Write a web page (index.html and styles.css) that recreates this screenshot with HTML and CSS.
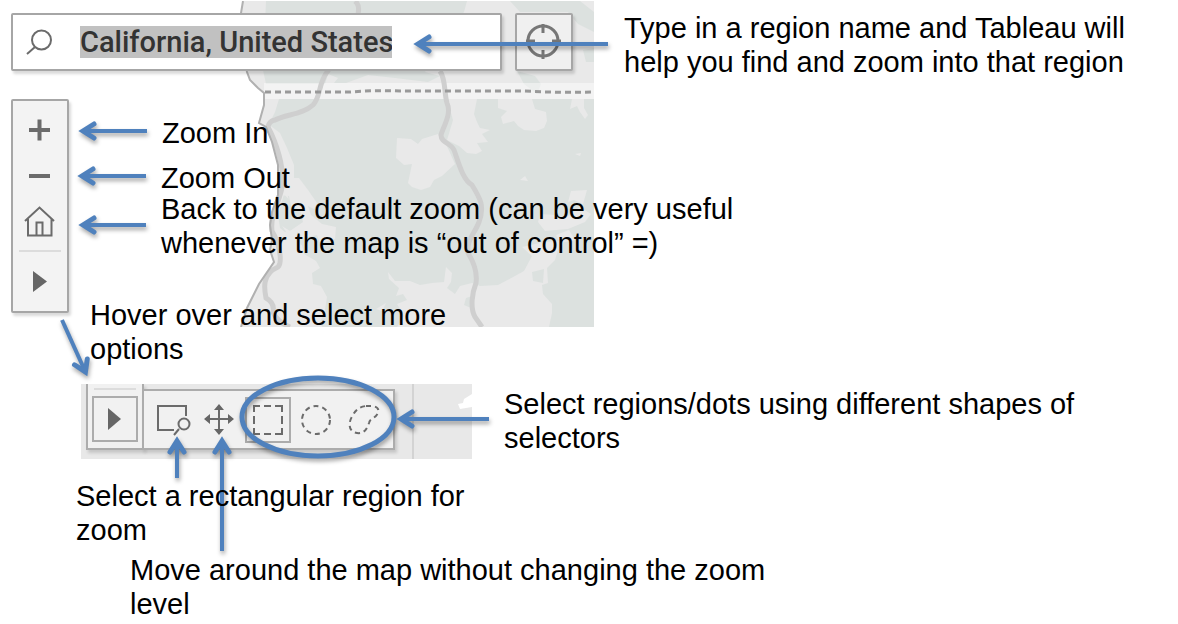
FILE: index.html
```html
<!DOCTYPE html>
<html lang="en">
<head>
<meta charset="utf-8">
<title>Map controls guide</title>
<link rel="stylesheet" href="styles.css">
</head>
<body>
<main class="guide">
  <svg class="map" viewBox="240 1 354 326" aria-hidden="true">
    <path class="land" d="M243 1 L241 13 L242 45 L247 72 L250 80 L258 88 L264 93 L264 105 L259 123 L266 127 L272 142 L278 165 L278 195 L272 212 L270 225 L272 240 L270 250 L274 262 L259 284 L247 308 L241 327 L594 327 L594 1 Z"/>
    <path class="forest" d="M266 1 H467 L464 12 L450 30 L425 72 L440 76 L428 82 L395 78 L368 75 L346 83 H334 L338 78 L328 74 L325 84 H266 L263 70 Z M510 1 H580 L594 12 V32 L578 24 L568 12 H520 Z M517 71 L535 76 L541 84 L537 94 L524 84 Z M583 50 L594 48 V62 H586 Z"/>
    <path class="forest" d="M279 99 H594 V327 H322 L269 124 L275 112 Z"/>
    <path class="forest" d="M284 194 L291 202 L293 210 L304 216 L300 224 L293 230 L285 232 L280 228 L278 215 Z"/>
    <path class="field" d="M268 124 L280 133 L287 148 L294 165 L294 178 L299 178 L308 190 L317 203 L314 209 L308 206 L311 215 L322 224 L336 227 L335 239 L320 243 L317 235 L303 238 L298 232 L287 233 L282 226 L290 231 L303 222 L300 210 L291 206 L289 196 L280 195 L276 215 L280 232 L288 240 L302 245 L304 254 L316 261 L320 268 L312 273 L313 284 L321 286 L327 297 L325 310 L318 327 H241 L274 262 L270 225 L278 190 L278 165 Z"/>
    <path class="field" d="M397 138 L411 139 L418 144 L422 139 L438 134 L446 144 L455 164 L442 176 L434 180 L430 187 L421 190 L412 187 L408 183 L412 164 L404 165 L396 158 Z"/>
    <path class="field" d="M447 99 H477 L474 114 L477 122 L480 128 L490 130 L482 134 L488 142 L477 143 L482 151 L476 154 L467 153 L459 146 L447 140 L453 120 Z"/>
    <path class="field" d="M498 99 H532 L535 109 L546 112 L547 121 L544 128 L536 131 L524 130 L518 126 L514 121 L503 124 L501 117 L507 111 L498 108 Z"/>
    <path class="field" d="M572 99 H584 V108 L588 115 L585 119 L580 112 L577 106 L570 109 Z"/>
    <path class="field" d="M388 272 L395 281 L410 281 L420 285 L432 283 L444 282 L446 267 L452 273 L451 282 L447 288 L455 294 L460 286 L472 283 L480 286 L498 285 L515 276 L524 271 L532 256 L522 247 L544 242 L559 241 L558 250 L555 260 L547 268 L548 283 L542 285 L543 294 L552 304 L552 313 L549 327 H397 L404 316 L397 304 L407 300 L403 294 L396 296 L399 288 L389 279 Z"/>
    <path class="field" d="M571 191 L587 190 L583 204 L574 200 L568 202 Z M540 214 L556 215 L564 219 L580 207 L591 214 L585 222 L568 229 L545 231 L538 222 Z M556 235 L569 230 L575 240 L560 243 Z M520 180 L525 176 L528 181 Z M575 154 L581 153 L580 156 Z M376 309 L386 303 L382 311 Z"/>
    <path class="forest" d="M532 272 L544 269 L543 283 L533 281 Z M466 298 L472 296 L471 308 L464 305 Z"/>
    <path class="border-band" d="M264 91 H594"/>
    <path class="road" d="M355 1 C360 5 359 12 357 18 C356 42 337 57 327 72 C318 84 321 97 313 105 C302 115 286 114 275 120 Q269 121 268 127 C276 142 285 168 282 187 C280 201 270 214 272 231 C279 242 283 262 278 267 C262 274 264 288 266 298 Q275 303 273 312 Q277 322 290 327"/>
    <path class="road" d="M440 71 C446 80 444 93 447 103 C452 114 443 127 441 135 C441 143 451 143 454 150 C459 164 463 180 472 185 C480 198 485 206 479 222 C475 233 466 241 468 253 Q478 269 476 283 C472 293 470 308 475 317 L482 327"/>
    <path class="boundary" d="M265 92 H350 Q375 90 400 91 H525 Q560 93 594 92"/>
    <path class="coast" d="M243 1 L241 13 L242 45 L247 72 L250 80 L258 88 L264 93 L264 105 L259 123 L266 127 L272 142 L278 165 L278 195 L272 212 L270 225 L272 240 L270 250 L274 262 L259 284 L247 308 L241 327"/>
  </svg>

  <div class="search-row">
    <form class="search">
      <svg class="search-icon" viewBox="0 0 28 28" aria-hidden="true"><circle cx="15.500" cy="12" r="9.500"/><path d="M9 19 L1 26"/></svg>
      <input class="search-input" type="text" aria-label="Region" value="California, United States">
    </form>
    <button class="locate" type="button" aria-label="Locate">
      <svg viewBox="0 0 36 36"><circle cx="17" cy="17" r="15"/><path d="M17 0 V9 M17 26 V35 M0 17 H9 M26 17 H35"/></svg>
    </button>
  </div>

  <div class="zoom-bar">
    <button type="button" aria-label="Zoom in"><svg viewBox="0 0 34 34"><path class="bold" d="M6 17 H27 M16.500 6.500 V27.500"/></svg></button>
    <button type="button" aria-label="Zoom out"><svg viewBox="0 0 34 34"><path class="bold" d="M6 17 H27"/></svg></button>
    <button type="button" aria-label="Default zoom"><svg viewBox="0 0 34 34"><path d="M2 16 L16.500 2.500 L31 16 M5 14 V30.500 H28.500 V14 M13.500 30 V17.500 H19.500 V30"/></svg></button>
    <hr>
    <button type="button" aria-label="More options"><svg viewBox="0 0 34 34"><path class="solid" d="M10 7 V28 L24 17.500 Z"/></svg></button>
  </div>

  <div class="strip">
    <div class="strip-main">
      <hr>
      <button class="framed" type="button" aria-label="More options"><svg viewBox="0 0 34 34"><path class="solid" d="M10 6 V28 L23 17 Z"/></svg></button>
    </div>
    <div class="strip-tools">
      <button type="button" aria-label="Zoom area"><svg viewBox="0 0 36 36"><path d="M30 14 V4 H2 V28 H18 M23 27 L18 33"/><circle cx="28" cy="22" r="5.500"/></svg></button>
      <button type="button" aria-label="Pan"><svg viewBox="0 0 36 36"><path d="M16 7 V28 M5 17 H27"/><path class="solid" d="M16 2 L21 8 H11 Z M16 33 L21 27 H11 Z M1 17 L7 12 V22 Z M31 17 L25 12 V22 Z"/></svg></button>
      <button class="framed" type="button" aria-label="Rectangular selection"><svg viewBox="0 0 36 36"><path d="M4 10 V4 H10 M14 4 H21 M25 4 H32 V10 M32 14 V22 M32 26 V32 H25 M21 32 H14 M10 32 H4 V26 M4 22 V14"/></svg></button>
      <button type="button" aria-label="Radial selection"><svg viewBox="0 0 36 36"><circle class="dashed" cx="19" cy="18" r="14"/></svg></button>
      <button type="button" aria-label="Lasso selection"><svg viewBox="0 0 36 36"><path class="dashed" d="M22 4 H28 Q36 5 34 11 C31 17 26 16 25 21 C23 27 20 32 13 31 C4 30 4 20 9 13 Q13 5 22 4 Z"/></svg></button>
    </div>
    <svg class="strip-lake" viewBox="0 0 20 26" aria-hidden="true"><path d="M20 10 L12 15 L11 19 L6 20 L8 25 L14 24 L20 23 Z"/></svg>
  </div>

  <svg class="arrows" viewBox="0 0 1178 624" aria-hidden="true">
    <defs>
      <marker id="head" markerUnits="userSpaceOnUse" markerWidth="24" markerHeight="24" refX="15" refY="12" orient="auto">
        <path d="M5 5 L16 12 L5 19"/>
      </marker>
    </defs>
    <g class="arrow-lines">
      <path d="M608 44 H419"/>
      <path d="M147 131 H84"/>
      <path d="M146 176 H83"/>
      <path d="M146 225 H84"/>
      <path d="M62 320 L85 371"/>
      <path d="M177 478 V442"/>
      <path d="M222 551 V442"/>
      <path d="M489 419 H402"/>
    </g>
    <ellipse cx="318" cy="417" rx="76" ry="39"/>
  </svg>

  <p class="note note-search">Type in a region name and Tableau will<br>help you find and zoom into that region</p>
  <p class="note note-in">Zoom In</p>
  <p class="note note-out">Zoom Out</p>
  <p class="note note-home">Back to the default zoom (can be very useful<br>whenever the map is “out of control” =)</p>
  <p class="note note-more">Hover over and select more<br>options</p>
  <p class="note note-shapes">Select regions/dots using different shapes of<br>selectors</p>
  <p class="note note-area">Select a rectangular region for<br>zoom</p>
  <p class="note note-pan">Move around the map without changing the zoom<br>level</p>
</main>
</body>
</html>
```
FILE: styles.css
```css
* { box-sizing: border-box; }

body {
  margin: 0;
  background: #fff;
  color: #000;
  font-family: "Liberation Sans", Arial, sans-serif;
}

.guide {
  position: relative;
  padding: 13px 11px 0;
  min-height: 100vh;
  overflow: hidden;
}

button {
  display: flex;
  align-items: center;
  justify-content: center;
  padding: 0;
  border: 0;
  background: none;
}

button svg,
.search-icon {
  fill: none;
  stroke: #6b6b6b;
  stroke-width: 2;
}

button .bold { stroke-width: 4; }
button .solid { fill: #666; stroke: none; }
button .dashed { stroke-dasharray: 5 4; }

hr {
  width: 42px;
  margin: 0;
  border: 0;
  border-top: 2px solid #dcdcdc;
}

/* Map */
.map {
  position: absolute;
  left: 240px;
  top: 1px;
  width: 354px;
  height: 326px;
}

.land, .field { fill: #e9e9e9; }
.forest { fill: #dce1df; }
.border-band { fill: none; stroke: #fff; stroke-opacity: 0.45; stroke-width: 16; }
.road { fill: none; stroke: #cfcfcf; stroke-width: 5; }
.boundary { fill: none; stroke: #999; stroke-width: 3; stroke-dasharray: 6 4; }
.coast { fill: none; stroke: #b0b0b0; stroke-width: 2; }

/* Search */
.search-row {
  position: relative;
  display: flex;
  gap: 13px;
}

.search,
.locate,
.zoom-bar {
  border: 2px solid #a6a6a6;
  border-radius: 2px;
  box-shadow: 2px 3px 3px rgba(0, 0, 0, 0.15);
}

.search {
  display: flex;
  align-items: center;
  gap: 26px;
  width: 491px;
  height: 58px;
  padding: 0 13px;
  background: #fff;
}

.search-icon { width: 28px; height: 28px; }

.search-input {
  width: 312px;
  height: 32px;
  padding: 0;
  border: 0;
  background: #c1c1c1;
  color: #333;
  font: 500 29px/32px Roboto, sans-serif;
}

.locate {
  width: 58px;
  height: 58px;
  background: #f0f0f0;
}

.locate svg { width: 36px; height: 36px; stroke: #777; stroke-width: 3; }

/* Zoom toolbar */
.zoom-bar {
  position: relative;
  display: flex;
  flex-direction: column;
  align-items: center;
  width: 58px;
  margin-top: 28px;
  padding: 6px 0 7px;
  background: #f3f3f3;
}

.zoom-bar button { width: 46px; height: 46px; }
.zoom-bar svg { width: 34px; height: 34px; }
.zoom-bar hr { margin: 5px 0 6px; }

/* Expanded toolbar */
.strip {
  position: relative;
  display: flex;
  width: 391px;
  height: 75px;
  margin: 71px 0 0 70px;
  padding-left: 5px;
  background: linear-gradient(90deg, transparent 331px, #d3d3d3 331px, #d3d3d3 333px, transparent 333px) #e8e8e8;
}

.strip-main,
.strip-tools {
  border: 2px solid #acacac;
  background: #f1f1f1;
  box-shadow: 2px 3px 3px rgba(0, 0, 0, 0.15);
}

.strip-main {
  display: flex;
  flex-direction: column;
  align-items: center;
  gap: 6px;
  width: 58px;
  height: 66px;
  padding-top: 4px;
  border-top: 0;
}

.strip-tools {
  display: flex;
  align-items: center;
  gap: 1px;
  height: 61px;
  width: 253px;
  margin: 5px 0 0 -2px;
  padding-left: 7px;
}

.strip button { width: 46px; height: 46px; }
.strip .framed { border: 2px solid #acacac; }
.strip-tools svg { width: 36px; height: 36px; flex: none; }
.strip-main svg { width: 34px; height: 34px; }

.strip-lake {
  position: absolute;
  right: 0;
  top: 0;
  width: 20px;
  height: 26px;
  fill: #fff;
}

/* Arrows */
.arrows {
  position: absolute;
  left: 0;
  top: 0;
  width: 1178px;
  height: 624px;
  fill: none;
  stroke: #4f81bd;
  stroke-width: 5;
  pointer-events: none;
  filter: drop-shadow(1px 3px 2px rgba(0, 0, 0, 0.35));
}

.arrow-lines path { stroke-width: 4; marker-end: url(#head); }
.arrows marker path { stroke-linecap: round; }

/* Notes */
.note {
  position: absolute;
  margin: 0;
  font-size: 29px;
  line-height: 34px;
  white-space: nowrap;
}

.note-search { left: 624px; top: 11px; }
.note-in { left: 162px; top: 116px; }
.note-out { left: 161px; top: 161px; }
.note-home { left: 161px; top: 192px; }
.note-more { left: 90px; top: 298px; }
.note-shapes { left: 504px; top: 387px; }
.note-area { left: 76px; top: 479px; }
.note-pan { left: 130px; top: 553px; }
```
